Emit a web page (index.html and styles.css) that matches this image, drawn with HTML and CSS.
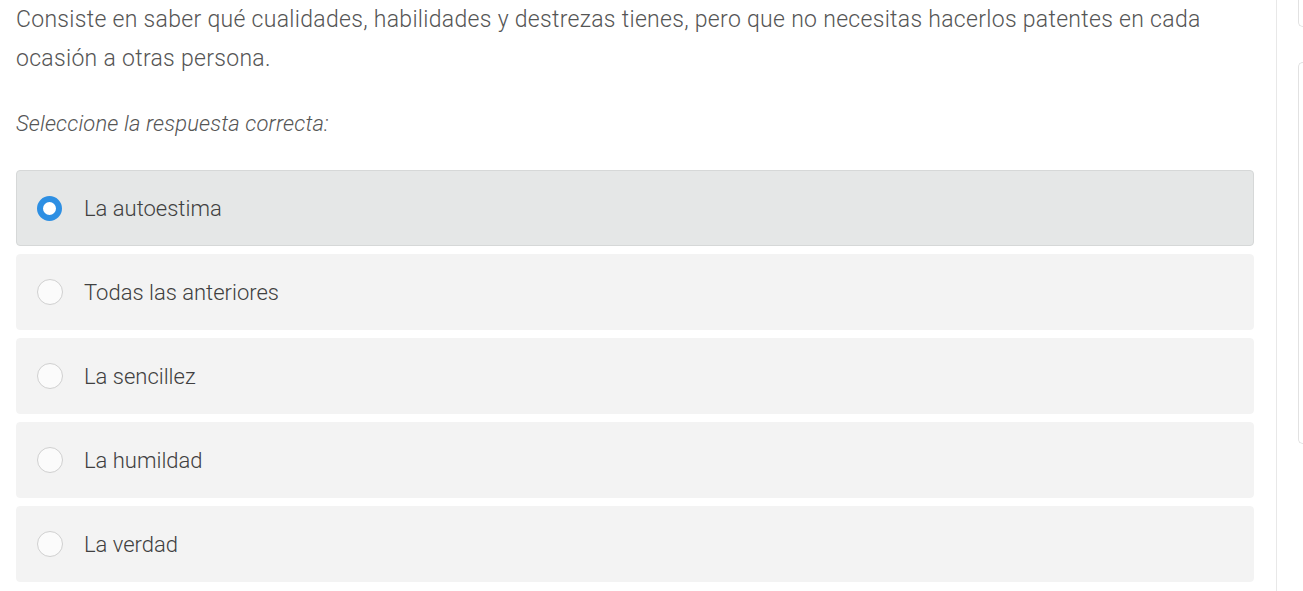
FILE: index.html
```html
<!DOCTYPE html>
<html lang="es">
<head>
    <meta charset="UTF-8">
    <title>Pregunta</title>
    <link rel="stylesheet" href="styles.css">
</head>
<body>
    <div class="page">
        <div class="main">
            <p class="question">Consiste en saber qué cualidades, habilidades y destrezas tienes, pero que no necesitas hacerlos patentes en cada ocasión a otras persona.</p>
            <p class="prompt">Seleccione la respuesta correcta:</p>

            <div class="options">
                <label class="option selected">
                    <span class="radio"></span>
                    <span class="option-text">La autoestima</span>
                </label>
                <label class="option">
                    <span class="radio"></span>
                    <span class="option-text">Todas las anteriores</span>
                </label>
                <label class="option">
                    <span class="radio"></span>
                    <span class="option-text">La sencillez</span>
                </label>
                <label class="option">
                    <span class="radio"></span>
                    <span class="option-text">La humildad</span>
                </label>
                <label class="option">
                    <span class="radio"></span>
                    <span class="option-text">La verdad</span>
                </label>
            </div>
        </div>

        <div class="sidebar">
            <div class="side-card top"></div>
            <div class="side-card"></div>
        </div>
    </div>
</body>
</html>
```

FILE: styles.css
```css
body {
    margin: 0;
    background-color: #ffffff;
    font-family: Roboto, "Liberation Sans", sans-serif;
    overflow: hidden;
}

.page {
    display: flex;
    height: 591px;
}

.main {
    width: 1238px;
    padding: 0 22px 0 16px;
    flex-shrink: 0;
}

.question {
    margin: 0;
    font-size: 23px;
    font-weight: 300;
    letter-spacing: 0.3px;
    line-height: 39px;
    color: #555;
}

.prompt {
    margin: 27px 0 27px;
    font-size: 22px;
    font-weight: 300;
    font-style: italic;
    letter-spacing: 0.15px;
    line-height: 38px;
    color: #555;
}

.options {
    display: flex;
    flex-direction: column;
    gap: 8px;
}

.option {
    display: flex;
    align-items: center;
    height: 76px;
    box-sizing: border-box;
    padding-left: 20px;
    background-color: #f3f3f3;
    border: 1px solid #f3f3f3;
    border-radius: 4px;
}

.option.selected {
    background-color: #e5e7e7;
    border-color: #d6d8d8;
}

.radio {
    width: 26px;
    height: 26px;
    box-sizing: border-box;
    border: 1px solid #d0d0d0;
    border-radius: 50%;
    background-color: #fbfbfb;
    flex-shrink: 0;
}

.selected .radio {
    width: 25px;
    height: 25px;
    border: 6px solid #2d8fe3;
    background-color: #ffffff;
}

.option-text {
    margin-left: 21px;
    font-size: 22px;
    font-weight: 300;
    color: #404040;
}

.selected .option-text {
    margin-left: 22px;
}

.sidebar {
    flex: 1;
    border-left: 1px solid #e8e8e8;
    padding-left: 21px;
    display: flex;
    flex-direction: column;
    gap: 35px;
}

.side-card {
    height: 380px;
    border: 1px solid #e2e2e2;
    border-right: none;
    border-radius: 10px 0 0 10px;
}

.side-card.top {
    height: 35px;
    margin-top: -10px;
}
```
